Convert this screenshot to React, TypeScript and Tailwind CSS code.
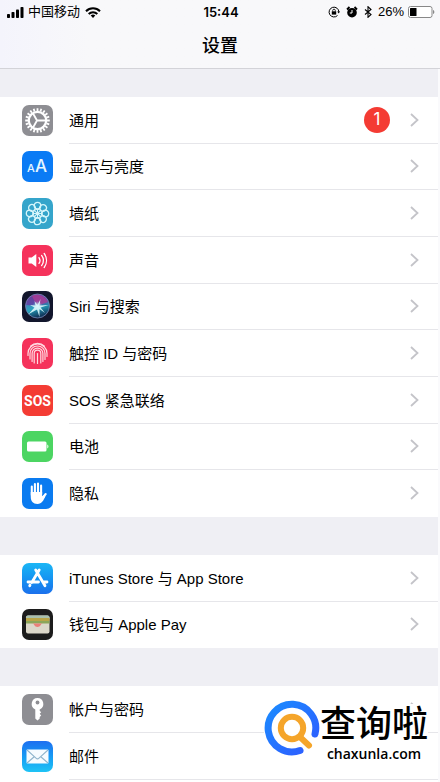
import type { ReactNode } from 'react'

interface Item {
    label: string
    icon: ReactNode
    badge?: number
}

interface Group {
    className: string
    lastDivider?: boolean
    items: Item[]
}

interface RowProps extends Item {
    divider: boolean
}

interface TileProps {
    className: string
    children?: ReactNode
}

const Tile = ({ className, children }: TileProps) => (
    <svg
        viewBox="0 0 31 31"
        className={`h-[31px] w-[31px] flex-none rounded-[7px] ${className}`}
        aria-hidden="true"
    >
        {children}
    </svg>
)

const spin = (count: number) =>
    Array.from({ length: count }, (_, i) => (i * 360) / count)

const GearIcon = () => (
    <Tile className="bg-[#8e8e93]">
        <g stroke="#fff" fill="none">
            {spin(20).map((a) => (
                <path
                    key={a}
                    d="M15.5 3.2V6"
                    strokeWidth="1.8"
                    transform={`rotate(${a} 15.5 15.5)`}
                />
            ))}
            <circle cx="15.5" cy="15.5" r="8.7" strokeWidth="2.2" />
            <path
                d="M15 15.5H24M15 15.5L10.8 8M15 15.5L10.8 23"
                strokeWidth="1.8"
            />
        </g>
    </Tile>
)

const DisplayIcon = () => (
    <Tile className="bg-[#0a7bf5]">
        <g
            fill="#e6f6ff"
            fontFamily="Inter, 'Liberation Sans', sans-serif"
            fontWeight="500"
        >
            <text x="5" y="20.5" fontSize="11">A</text>
            <text x="13" y="20.5" fontSize="17">A</text>
        </g>
    </Tile>
)

const WallpaperIcon = () => (
    <Tile className="bg-[#35a5cb]">
        <g stroke="#d5f6fb" fill="none" strokeWidth="1.3">
            {spin(8).map((a) => (
                <g key={a} transform={`rotate(${a} 15.5 15.5)`}>
                    <circle cx="15.5" cy="7.6" r="3.3" />
                    <path d="M15.5 11v4" strokeWidth="1" />
                </g>
            ))}
            <circle cx="15.5" cy="15.5" r="4.2" strokeWidth="1" />
        </g>
        <circle cx="15.5" cy="15.5" r="1.6" fill="#d5f6fb" />
    </Tile>
)

const SoundIcon = () => (
    <Tile className="bg-[#f5325b]">
        <path d="M6.5 12.5h3.2l4.6-3.5v13l-4.6-3.5H6.5z" fill="#fff" />
        <g stroke="#fff" fill="none" strokeWidth="1.3" strokeLinecap="round">
            <path d="M17 12.6a5 5 0 0 1 0 5.8" />
            <path d="M19.6 10.4a8.5 8.5 0 0 1 0 10.2" />
            <path d="M22.2 8.5a12 12 0 0 1 0 14" />
        </g>
    </Tile>
)

const SiriIcon = () => (
    <Tile className="bg-[#12162c]">
        <defs>
            <linearGradient id="siri" x1="0" y1="0" x2="0.3" y2="1">
                <stop offset="0" stopColor="#6d3a94" />
                <stop offset="0.45" stopColor="#5a4aa8" />
                <stop offset="0.7" stopColor="#2291ae" />
                <stop offset="1" stopColor="#123a5e" />
            </linearGradient>
            <radialGradient id="siri-glow">
                <stop offset="0" stopColor="#fff" />
                <stop offset="0.4" stopColor="#bfeaf7" stopOpacity="0.6" />
                <stop offset="1" stopColor="#7fd9ee" stopOpacity="0" />
            </radialGradient>
        </defs>
        <circle cx="15.5" cy="15" r="12" fill="url(#siri)" />
        <path d="M15 15L10 5a12 12 0 0 1 16 6z" fill="#b63a93" opacity="0.7" />
        <path d="M15 15L4 14a12 12 0 0 0 2 8z" fill="#2ab8c8" opacity="0.6" />
        <circle cx="15.5" cy="15" r="12" fill="none" stroke="#8593c4" strokeWidth="0.7" />
        <circle cx="15.5" cy="15" r="5" fill="url(#siri-glow)" />
        <path
            d="M15.5 14L18.5 8l-1 6.500 9-.5-8 2.500L23 22l-5.500-4L17.500 26l-2.500-7.500L6 23.500l6.500-7L8 14l5.500.5L12.500 10z"
            fill="#d9f7fb"
            opacity="0.9"
        />
    </Tile>
)

const TouchIdIcon = () => (
    <Tile className="bg-[#f5325b]">
        <g stroke="#ffd9e0" fill="none" strokeWidth="1.2" strokeLinecap="round">
            <path d="M8.5 8.2a10 10 0 0 1 14 0" />
            <path d="M6 17.5v-2a9.5 9.5 0 0 1 19 0v3" />
            <path d="M8 21v-5.5a7.5 7.5 0 0 1 15 0v6" />
            <path d="M10.1 23.5v-8a5.4 5.4 0 0 1 10.8 0v8" />
            <path d="M12.2 25v-9.5a3.3 3.3 0 0 1 6.6 0V25" />
            <path d="M15.5 15.5v10" />
        </g>
    </Tile>
)

const SosIcon = () => (
    <Tile className="bg-[#f43c34]">
        <text
            x="15.5"
            y="20.5"
            textAnchor="middle"
            fontSize="14"
            fontWeight="700"
            fill="#fff"
            fontFamily="Roboto, sans-serif"
        >
            SOS
        </text>
    </Tile>
)

const BatteryIcon = () => (
    <Tile className="bg-[#4cd562]">
        <rect x="5" y="10.5" width="19.5" height="10" rx="1.5" fill="#fff" />
        <path d="M25.3 13.5c1.5.5 1.5 3.5 0 4z" fill="#fff" />
    </Tile>
)

const PrivacyIcon = () => (
    <Tile className="bg-[#0a7bf0]">
        <g stroke="#fff" strokeWidth="2.1" strokeLinecap="round" fill="none">
            <path d="M9.8 17V8.5M12.9 15V6M16 15V5.5M19.1 16V7.5" />
            <path d="M20 20.5l3.7-4.5" />
        </g>
        <path
            d="M8.75 14h11.4v4.2l1.6-1 1.7 1C21.5 22 20 26 15.5 26s-6.75-3-6.75-7z"
            fill="#fff"
        />
    </Tile>
)

const AppStoreIcon = () => (
    <Tile className="bg-linear-to-b from-[#1cb6f5] to-[#1b70ec]">
        <path
            d="M17.2 7L9.8 19.5M8 22.2l-.3.5M13.7 7l9.3 15.7M6 19H16.5M21 19h4"
            stroke="#fff"
            strokeWidth="2.8"
            strokeLinecap="round"
        />
    </Tile>
)

const WalletIcon = () => (
    <Tile className="bg-[#1c1c1c]">
        <rect x="4" y="6.5" width="23.5" height="18" rx="2" fill="#dcd8ca" />
        <path d="M4 10V8.5a2 2 0 0 1 2-2h19.5a2 2 0 0 1 2 2V10z" fill="#a9c0ae" />
        <path d="M4 9h23.5v3H4z" fill="#b9a548" />
        <path d="M4 12h23.5v2.5H4z" fill="#8ba65a" />
        <path d="M10.5 14.5h10c-1.5 0-2 3.5-5 3.5s-3.5-3.5-5-3.5z" fill="#ea7f78" />
    </Tile>
)

const KeyIcon = () => (
    <Tile className="bg-[#8e8e93]">
        <path
            d="M15.5 4a6 6 0 0 0-2.2 11.5v9l2.2 2 2.2-2V23l1.5-1.5-1.5-1.7 1.5-1.5-1.5-1.5v-1.3A6 6 0 0 0 15.5 4z"
            fill="#fff"
        />
        <circle cx="15.5" cy="8.5" r="1.9" fill="#8e8e93" />
    </Tile>
)

const MailIcon = () => (
    <Tile className="bg-linear-to-b from-[#1f6ff0] to-[#1fc3f5]">
        <rect x="4.5" y="8.5" width="22" height="14" rx="1" fill="#f6fbff" />
        <path
            d="M5 9l9 8.2c1 .9 2 .9 3 0L26 9M5 22l7.5-6.5M26 22l-7.5-6.5"
            fill="none"
            stroke="#8fb4cc"
            strokeWidth="1.1"
        />
    </Tile>
)

const groups: Group[] = [
    {
        className: 'h-[420px]',
        items: [
            { label: '通用', icon: <GearIcon />, badge: 1 },
            { label: '显示与亮度', icon: <DisplayIcon /> },
            { label: '墙纸', icon: <WallpaperIcon /> },
            { label: '声音', icon: <SoundIcon /> },
            { label: 'Siri 与搜索', icon: <SiriIcon /> },
            { label: '触控 ID 与密码', icon: <TouchIdIcon /> },
            { label: 'SOS 紧急联络', icon: <SosIcon /> },
            { label: '电池', icon: <BatteryIcon /> },
            { label: '隐私', icon: <PrivacyIcon /> },
        ],
    },
    {
        className: 'h-[93px]',
        items: [
            { label: 'iTunes Store 与 App Store', icon: <AppStoreIcon /> },
            { label: '钱包与 Apple Pay', icon: <WalletIcon /> },
        ],
    },
    {
        className: 'h-24 pb-0.5',
        lastDivider: true,
        items: [
            { label: '帐户与密码', icon: <KeyIcon /> },
            { label: '邮件', icon: <MailIcon /> },
        ],
    },
]

const StatusBar = () => (
    <div className="grid h-6 grid-cols-[1fr_auto_1fr] items-center pr-[5px] pl-[7px] text-[13px] leading-4">
        <div className="flex items-center gap-1">
            <svg viewBox="0 0 17 11" className="h-[11px] w-[17px]" aria-hidden="true">
                <rect x="0" y="7" width="3" height="4" rx="0.8" />
                <rect x="4.5" y="5" width="3" height="6" rx="0.8" />
                <rect x="9" y="2.5" width="3" height="8.5" rx="0.8" />
                <rect x="13.5" y="0" width="3" height="11" rx="0.8" />
            </svg>
            <span>中国移动</span>
            <svg viewBox="0 0 16 11" className="ml-px h-[11px] w-4" aria-hidden="true">
                <g fill="none" stroke="#000" strokeWidth="2">
                    <path d="M1 4.3a9.8 9.8 0 0 1 14 0" />
                    <path d="M3.7 7a6 6 0 0 1 8.6 0" />
                </g>
                <path d="M8 11L5.7 8.6a3.3 3.3 0 0 1 4.6 0z" />
            </svg>
        </div>
        <span className="font-[Inter] font-semibold">15:44</span>
        <div className="flex items-center justify-end gap-1">
            <svg viewBox="0 0 12 12" className="mr-0.5 h-3 w-3" aria-hidden="true">
                <path
                    d="M9.5 9.5A4.9 4.9 0 1 1 10.9 6"
                    fill="none"
                    stroke="#000"
                    strokeWidth="1"
                />
                <path d="M9.2 5.5H12L10.7 7.5z" />
                <rect x="3.8" y="5.3" width="4.4" height="3.3" />
                <path
                    d="M4.7 5.5v-1a1.3 1.3 0 0 1 2.6 0v1"
                    fill="none"
                    stroke="#000"
                    strokeWidth="0.8"
                />
            </svg>
            <svg viewBox="0 0 12 12" className="h-3 w-3" aria-hidden="true">
                <circle cx="6" cy="6.7" r="4.8" />
                <path d="M1 3.5L3.5 1M11 3.5L8.5 1" stroke="#000" strokeWidth="1.8" />
                <path d="M6 4v3H3.8" fill="none" stroke="#fff" strokeWidth="1" />
            </svg>
            <svg viewBox="0 0 12 12" className="h-3 w-3" aria-hidden="true">
                <path
                    d="M3 3.5L9 8.5L6 11.3V.7L9 3.5L3 8.5"
                    fill="none"
                    stroke="#000"
                    strokeWidth="1.1"
                />
            </svg>
            <span>26%</span>
            <svg viewBox="0 0 27 12" className="h-3 w-[27px]" aria-hidden="true">
                <rect x="0.5" y="0.5" width="23.5" height="11" rx="2" fill="#fff" stroke="#888" />
                <rect x="2" y="2" width="6.5" height="8" rx="0.5" />
                <path d="M25 4c1.8.5 1.8 3.5 0 4z" fill="#888" />
            </svg>
        </div>
    </div>
)

const Row = ({ label, icon, badge, divider }: RowProps) => (
    <li className="flex">
        <a href="#" className="flex flex-1 items-center pl-[22px]">
            {icon}
            <span
                className={`ml-4 flex flex-1 items-center self-stretch border-b pr-[19px] text-[15px] ${
                    divider ? 'border-[#e6e6ea]' : 'border-transparent'
                }`}
            >
                <span className="flex-1 pt-0.5">{label}</span>
                {badge && (
                    <span className="mr-5 flex h-[26px] w-[26px] items-center justify-center rounded-full bg-[#f43b33] font-[Inter] text-[17px] text-white">
                        {badge}
                    </span>
                )}
                <svg viewBox="0 0 9 14" className="h-3.5 w-[9px]" aria-hidden="true">
                    <path d="M1 1l6.5 6L1 13" fill="none" stroke="#c4c4c9" strokeWidth="1.8" />
                </svg>
            </span>
        </a>
    </li>
)

const Watermark = () => (
    <div className="absolute right-3 bottom-4 flex items-start bg-white pb-1 text-black">
        <svg viewBox="0 0 56 56" className="-mt-1 h-14 w-14" aria-hidden="true">
            <defs>
                <linearGradient id="ring" x1="0" y1="0" x2="1" y2="1">
                    <stop offset="0" stopColor="#1b8bff" />
                    <stop offset="1" stopColor="#2f5bff" />
                </linearGradient>
            </defs>
            <path
                d="M36 50.5A23.8 23.8 0 1 1 51 34"
                fill="none"
                stroke="url(#ring)"
                strokeWidth="7"
                strokeLinecap="round"
            />
            <path d="M36 37l9 8.5" stroke="#f5a52a" strokeWidth="6" strokeLinecap="round" />
            <circle cx="28" cy="28" r="11.2" fill="#fff" stroke="#f5a52a" strokeWidth="6" />
        </svg>
        <div className="flex flex-col items-center">
            <span className="text-[36px] leading-[42px] font-medium">查询啦</span>
            <span className="font-['Open_Sans'] text-[14px] leading-4 font-semibold">
                chaxunla.com
            </span>
        </div>
    </div>
)

const App = () => {
    return (
        <div className="relative min-h-screen bg-[#efeff4] font-['Liberation_Sans','Noto_Sans_CJK_SC',sans-serif] text-black">
            <header className="h-[69px] border-b border-[#d3d3d8] bg-linear-to-r from-[#f4f4fc] via-[#f8f8fa] via-20% to-[#f8f8fa]">
                <StatusBar />
                <h1 className="pt-2 text-center text-[18px] leading-7 font-medium">设置</h1>
            </header>
            <main className="flex flex-col gap-[38px] border-r-2 border-[#fafafc] pt-7">
                {groups.map(({ className, lastDivider = false, items }, i) => (
                    <ul key={i} className={`grid auto-rows-fr bg-white ${className}`}>
                        {items.map((item, j) => (
                            <Row
                                key={item.label}
                                {...item}
                                divider={lastDivider || j < items.length - 1}
                            />
                        ))}
                    </ul>
                ))}
            </main>
            <Watermark />
        </div>
    )
}

export default App
